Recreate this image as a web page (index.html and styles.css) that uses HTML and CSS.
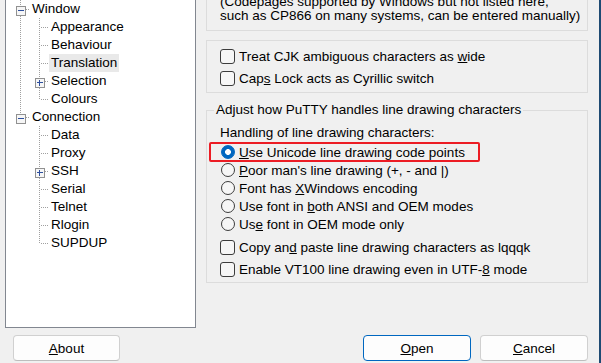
FILE: index.html
```html
<!DOCTYPE html>
<html lang="en">
<head>
    <meta charset="UTF-8">
    <title>PuTTY Configuration - Translation</title>
    <link rel="stylesheet" href="styles.css">
</head>
<body>
    <div class="dialog">
        <div class="main">
            <!-- Category tree -->
            <div class="tree">
                <div class="row">
                    <span class="cell ln-tee"><svg width="10" height="10" viewBox="0 0 10 10"><rect x="0.5" y="0.5" width="9" height="9" fill="#f6f6f6" stroke="#919191"/><path d="M2 4.5h6" stroke="#2d4f9e"/></svg></span>
                    <span class="label">Window</span>
                </div>
                <div class="row"><span class="cell ln-pipe"></span><span class="cell ln-tee"></span><span class="label">Appearance</span></div>
                <div class="row"><span class="cell ln-pipe"></span><span class="cell ln-tee"></span><span class="label">Behaviour</span></div>
                <div class="row"><span class="cell ln-pipe"></span><span class="cell ln-tee"></span><span class="label selected">Translation</span></div>
                <div class="row">
                    <span class="cell ln-pipe"></span>
                    <span class="cell ln-tee"><svg width="10" height="10" viewBox="0 0 10 10"><rect x="0.5" y="0.5" width="9" height="9" fill="#f6f6f6" stroke="#919191"/><path d="M2 4.5h6M4.5 2v6" stroke="#2d4f9e"/></svg></span>
                    <span class="label">Selection</span>
                </div>
                <div class="row"><span class="cell ln-pipe"></span><span class="cell ln-elbow"></span><span class="label">Colours</span></div>
                <div class="row">
                    <span class="cell ln-elbow"><svg width="10" height="10" viewBox="0 0 10 10"><rect x="0.5" y="0.5" width="9" height="9" fill="#f6f6f6" stroke="#919191"/><path d="M2 4.5h6" stroke="#2d4f9e"/></svg></span>
                    <span class="label">Connection</span>
                </div>
                <div class="row"><span class="cell"></span><span class="cell ln-tee"></span><span class="label">Data</span></div>
                <div class="row"><span class="cell"></span><span class="cell ln-tee"></span><span class="label">Proxy</span></div>
                <div class="row">
                    <span class="cell"></span>
                    <span class="cell ln-tee"><svg width="10" height="10" viewBox="0 0 10 10"><rect x="0.5" y="0.5" width="9" height="9" fill="#f6f6f6" stroke="#919191"/><path d="M2 4.5h6M4.5 2v6" stroke="#2d4f9e"/></svg></span>
                    <span class="label">SSH</span>
                </div>
                <div class="row"><span class="cell"></span><span class="cell ln-tee"></span><span class="label">Serial</span></div>
                <div class="row"><span class="cell"></span><span class="cell ln-tee"></span><span class="label">Telnet</span></div>
                <div class="row"><span class="cell"></span><span class="cell ln-tee"></span><span class="label">Rlogin</span></div>
                <div class="row"><span class="cell"></span><span class="cell ln-elbow"></span><span class="label">SUPDUP</span></div>
            </div>

            <!-- Settings panel -->
            <div class="panel">
                <div class="group codepage-group">
                    <p class="note">(Codepages supported by Windows but not listed here,<br>such as CP866 on many systems, can be entered manually)</p>
                </div>

                <div class="group options-group">
                    <div class="check-row"><span class="checkbox"></span><span>Treat CJK ambiguous characters as <u>w</u>ide</span></div>
                    <div class="check-row"><span class="checkbox"></span><span>Cap<u>s</u> Lock acts as Cyrillic switch</span></div>
                </div>

                <fieldset class="group line-group">
                    <legend>Adjust how PuTTY handles line drawing characters</legend>
                    <div class="group-body">
                        <div class="caption">Handling of line drawing characters:</div>
                        <div class="radio-row highlighted"><span class="radio checked"></span><span><u>U</u>se Unicode line drawing code points</span></div>
                        <div class="radio-row"><span class="radio"></span><span><u>P</u>oor man's line drawing (+, - and |)</span></div>
                        <div class="radio-row"><span class="radio"></span><span>Font has <u>X</u>Windows encoding</span></div>
                        <div class="radio-row"><span class="radio"></span><span>Use font in <u>b</u>oth ANSI and OEM modes</span></div>
                        <div class="radio-row"><span class="radio"></span><span>Us<u>e</u> font in OEM mode only</span></div>
                        <div class="check-list">
                            <div class="check-row"><span class="checkbox"></span><span>Copy an<u>d</u> paste line drawing characters as lqqqk</span></div>
                            <div class="check-row"><span class="checkbox"></span><span>Enable VT100 line drawing even in UTF-<u>8</u> mode</span></div>
                        </div>
                    </div>
                </fieldset>
            </div>
        </div>

        <div class="footer">
            <button class="btn about"><u>A</u>bout</button>
            <button class="btn default"><u>O</u>pen</button>
            <button class="btn"><u>C</u>ancel</button>
        </div>
    </div>
</body>
</html>
```

FILE: styles.css
```css
/* Dialog frame */
body {
    margin: 0;
    width: 601px;
    height: 363px;
    overflow: hidden;
    background-color: #f0f0f0;
    font-family: 'Liberation Sans', Arial, sans-serif;
    font-size: 13.5px;
    color: #000;
}

.dialog {
    box-sizing: border-box;
    height: 363px;
    display: flex;
    flex-direction: column;
    border-right: 2px solid #1e4a73;
}

.main {
    display: flex;
    gap: 10px;
    padding-left: 5px;
    height: 328px;
}

/* Category tree */
.tree {
    box-sizing: border-box;
    width: 191px;
    height: 328px;
    padding-left: 5px;
    background-color: #fff;
    border: 1px solid #828790;
    border-top: none;
}

.row {
    display: flex;
    height: 18px;
}

.cell {
    flex: none;
    width: 19px;
    height: 18px;
}

.cell svg {
    display: block;
    margin: 6px 0 0 5px;
}

.ln-pipe {
    background: repeating-linear-gradient(to bottom, #a0a0a0 0 1px, transparent 1px 2px) 9px 0 / 1px 100% no-repeat;
}

.ln-tee {
    background:
        repeating-linear-gradient(to bottom, #a0a0a0 0 1px, transparent 1px 2px) 9px 0 / 1px 100% no-repeat,
        repeating-linear-gradient(to right, #a0a0a0 0 1px, transparent 1px 2px) 11px 9px / 8px 1px no-repeat;
}

.ln-elbow {
    background:
        repeating-linear-gradient(to bottom, #a0a0a0 0 1px, transparent 1px 2px) 9px 0 / 1px 10px no-repeat,
        repeating-linear-gradient(to right, #a0a0a0 0 1px, transparent 1px 2px) 11px 9px / 8px 1px no-repeat;
}

.label {
    padding: 0 2px;
    line-height: 18px;
    white-space: nowrap;
}

.label.selected {
    background-color: #e9e9e9;
}

/* Right-hand panel */
.panel {
    width: 382px;
}

.group {
    border: 1px solid #dcdcdc;
}

.codepage-group {
    margin-top: -5px;
    border-top: none;
    padding: 0 0 7px 13px;
}

.note {
    margin: 0;
    line-height: 14px;
}

.options-group {
    margin-top: 9px;
    padding: 4px 0 3px 13px;
}

.check-row {
    display: flex;
    align-items: center;
    height: 22px;
    white-space: nowrap;
}

.checkbox {
    box-sizing: border-box;
    width: 15px;
    height: 15px;
    margin-right: 4px;
    border: 1px solid #3c3c3c;
    border-radius: 3px;
    background-color: #f6f6f6;
}

.line-group {
    margin: 9px 0 0;
    padding: 0;
    min-width: 0;
}

.line-group legend {
    margin-left: 7px;
    padding: 0 2px;
    line-height: 16px;
}

.group-body {
    padding: 6px 0 2px 13px;
}

.caption {
    line-height: 18px;
    margin-bottom: 1px;
}

.radio-row {
    position: relative;
    display: flex;
    align-items: center;
    height: 18px;
    white-space: nowrap;
}

.radio {
    box-sizing: border-box;
    width: 14px;
    height: 14px;
    margin: 0 4px 0 1px;
    border: 1px solid #3c3c3c;
    border-radius: 50%;
    background-color: #f6f6f6;
}

.radio.checked {
    border-color: #0067c0;
    background: radial-gradient(circle, #fff 0 2.6px, #0067c0 3.2px);
}

/* red annotation frame drawn over the selected option */
.highlighted::after {
    content: "";
    position: absolute;
    left: -11px;
    top: -1px;
    width: 271px;
    height: 20px;
    box-sizing: border-box;
    border: 2px solid #ec1c24;
    border-radius: 2px;
}

.check-list {
    margin-top: 3px;
}

/* Buttons */
.footer {
    display: flex;
    gap: 9px;
    margin-top: 7px;
    padding: 0 11px 0 13px;
}

.btn {
    box-sizing: border-box;
    width: 108px;
    height: 26px;
    padding: 0;
    font-family: inherit;
    font-size: 13.5px;
    color: #000;
    background-color: #fdfdfd;
    border: 1px solid #d0d0d0;
    border-bottom-color: #bdbdbd;
    border-radius: 4px;
}

.btn.about {
    width: 107px;
    margin-right: auto;
}

.btn.default {
    border-color: #0067c0;
}
```
